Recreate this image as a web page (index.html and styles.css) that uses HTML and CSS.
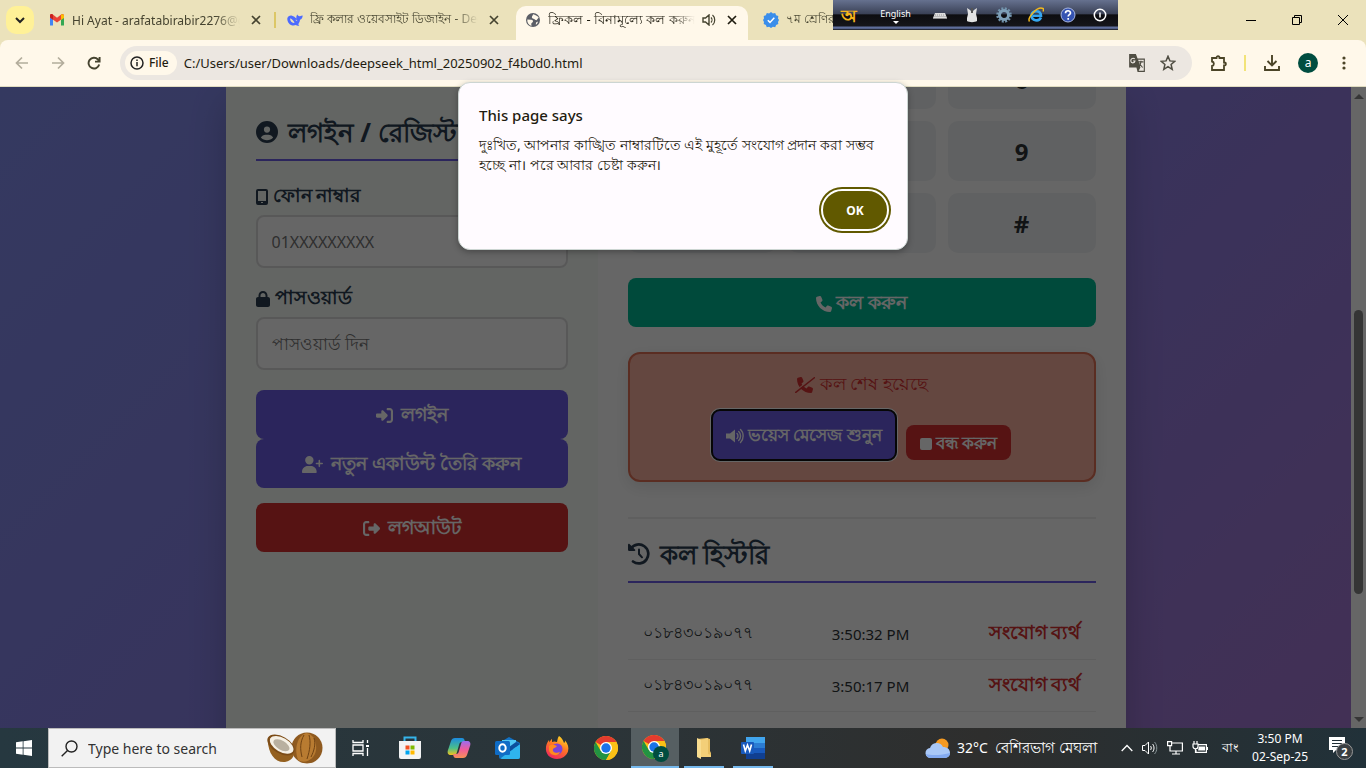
FILE: index.html
```html
<!DOCTYPE html>
<html lang="bn">
<head>
<meta charset="utf-8">
<meta name="viewport" content="width=device-width, initial-scale=1">
<title>ফ্রিকল - বিনামূল্যে কল করুন</title>
<link rel="stylesheet" href="styles.css">
</head>
<body>
<svg class="defs" width="0" height="0" aria-hidden="true">
  <symbol id="x" viewBox="0 0 10 10"><path d="M1 1l8 8M9 1l-8 8" fill="none" stroke="currentColor" stroke-width="1.7"/></symbol>
  <symbol id="chrome" viewBox="0 0 24 24"><circle cx="12" cy="12" r="12" fill="#fbc116"/><path d="M12 12L1.6 6A12 12 0 0 1 22.4 6z" fill="#e33b2e"/><path d="M1.6 6A12 12 0 0 0 12 24l5.2-9L12 12 6.8 15z" fill="#229342"/><path d="M12 6h10.4A12 12 0 0 1 12 24l5.2-9z" fill="#fbc116"/><circle cx="12" cy="12" r="6" fill="#fff"/><circle cx="12" cy="12" r="4.7" fill="#1a73e8"/></symbol>
</svg>

<header class="browser">
  <div class="tabstrip">
    <button class="tab-search" aria-label="Search tabs"><svg width="10" height="8" viewBox="0 0 10 8"><path d="M1 2l4 4 4-4" fill="none" stroke="#222" stroke-width="2"/></svg></button>
    <div class="tab">
      <svg width="16" height="16" viewBox="0 0 16 16"><path d="M1 13.500V5l3 2v6.500z" fill="#4285f4"/><path d="M12 13.500V7l3-2v8.500z" fill="#34a853"/><path d="M1 5.500V3.500c0-1.500 1.500-2 2.500-1.200L8 5.800l4.500-3.500c1-.8 2.500-.3 2.500 1.200v2L8 10.500z" fill="#ea4335"/><path d="M12 2.700c1-.9 3-.6 3 1.200v2l-3 2z" fill="#fbbc04"/><path d="M1 5.500V3.500c0-1.500 1.800-2 3-.8v5z" fill="#c5221f"/></svg>
      <span class="tab-title">Hi Ayat - arafatabirabir2276@gmail.com</span>
      <button class="tab-close" aria-label="Close tab"><svg><use href="#x"/></svg></button>
    </div>
    <span class="tab-sep"></span>
    <div class="tab">
      <svg width="16" height="16" viewBox="0 0 16 16"><path d="M.3 6.500C1 4 3 3.300 5 3.700c1.800.3 3 1.600 4.500 2.800C9 4.700 9.700 3.500 10.300 2.500c.6 1.300 1.400 1.800 2.700 1.700.9-.1 1.700-.7 2.700-.7-.1 2.400-1 3.700-2.700 4.200-.2 2-.9 3.400-2 4.600.6.300 1.200.6 1.200 1.100-1.200.5-2.400.2-3.400-.3C4.500 14.700.1 11.500.3 6.500z" fill="#4d6bfe"/><path d="M3 6.500c1.500 0 3.300 1.700 4.600 4.300C5.500 11.500 3.200 9.500 3 6.500zM8.500 8c.8-.5 1.700.2 1.800 1.200z" fill="#ebe2bb"/></svg>
      <span class="tab-title">ফ্রি কলার ওয়েবসাইট ডিজাইন - DeepSeek</span>
      <button class="tab-close" aria-label="Close tab"><svg><use href="#x"/></svg></button>
    </div>
    <span class="tab-sep clear"></span>
    <div class="tab active">
      <svg width="16" height="16" viewBox="0 0 16 16"><circle cx="8" cy="8" r="7" fill="#5b5e66"/><path d="M2.300 7.500l4 .3c1.500.2 2 1 1.500 2.200-.5 1-1.800 1-1.500 2.500l.2 1.500C3.500 13 2 10.500 2.300 7.500zM8 2.300c1.300 0 2 .8 3 1.200.8.400 2 .8 2.700 2l-2.200 2.700c-1 .2-1.600-.9-2.500-1.200C7.500 6.500 6.500 6 7 4.500c.3-.8 1-1 1-2.200zM11 10.500l2-1c-.3 1.500-1 2.500-2.200 3.300z" fill="#fff8ea"/></svg>
      <span class="tab-title">ফ্রিকল - বিনামূল্যে কল করুন</span>
      <svg class="sound" width="14" height="12" viewBox="0 0 14 12"><path d="M1 4h2.500L7 1v10L3.500 8H1z" fill="none" stroke="#45432f" stroke-width="1.400"/><path d="M9 3.500c1.300 1.300 1.300 3.700 0 5M10.500 1c3 2.500 3 7.500 0 10" fill="none" stroke="#45432f" stroke-width="1.200"/></svg>
      <button class="tab-close" aria-label="Close tab"><svg><use href="#x"/></svg></button>
    </div>
    <span class="tab-sep clear"></span>
    <div class="tab">
      <svg width="16" height="16" viewBox="0 0 16 16"><path d="M8 0l1.900 1.500 2.300-.5.900 2.200 2.200.9-.3 2.300L16 8l-1 1.900.3 2.200-2.200.9-.9 2.200-2.300-.5L8 16l-1.900-1.300-2.300.5-.9-2.200-2.200-.9.300-2.200L0 8l1-1.600-.3-2.300 2.200-.9L3.800 1l2.300.5z" fill="#3a8eea"/><path d="M4.800 8.200L7 10.400l4.300-4.600" fill="none" stroke="#fff" stroke-width="1.500"/></svg>
      <span class="tab-title">৭ম শ্রেণির</span>
    </div>
    <div class="window-controls">
      <button aria-label="Minimize"><svg width="12" height="12" viewBox="0 0 12 12"><path d="M1 6.500h10" stroke="#000"/></svg></button>
      <button aria-label="Restore"><svg width="12" height="12" viewBox="0 0 12 12" fill="none" stroke="#000"><path d="M1.500 3.500h7v7h-7zM3.500 3.500v-2h7v7h-2"/></svg></button>
      <button aria-label="Close"><svg width="12" height="12" viewBox="0 0 12 12"><path d="M1 1l10 10M11 1L1 11" stroke="#000"/></svg></button>
    </div>
  </div>
  <div class="toolbar">
    <button class="nav" aria-label="Back"><svg width="14" height="14" viewBox="0 0 14 14" fill="none" stroke="#b3ad9c" stroke-width="1.700"><path d="M13 7H2M7 1.500L1.500 7 7 12.500"/></svg></button>
    <button class="nav" aria-label="Forward"><svg width="14" height="14" viewBox="0 0 14 14" fill="none" stroke="#b3ad9c" stroke-width="1.700"><path d="M1 7h11M7 1.500L12.500 7 7 12.500"/></svg></button>
    <button class="nav" aria-label="Reload"><svg width="14" height="14" viewBox="0 0 14 14" fill="none" stroke="#45432f" stroke-width="1.900"><path d="M12.200 8.500A5.400 5.400 0 1 1 11 3.500L12.500 5M12.600 1v4.600H8"/></svg></button>
    <div class="address">
      <span class="chip"><svg width="14" height="14" viewBox="0 0 14 14"><circle cx="7" cy="7" r="6" fill="none" stroke="#222" stroke-width="1.500"/><path d="M7 6v4.200M7 3.500v1.500" stroke="#222" stroke-width="1.500"/></svg>File</span>
      <input class="url" aria-label="Address" value="C:/Users/user/Downloads/deepseek_html_20250902_f4b0d0.html">
      <svg width="18" height="18" viewBox="0 0 16 16"><path d="M1 0h6l1.500 4H15v12H8.500L7.500 12H1z" fill="#4f4d42"/><path d="M9 5h5v9.800H9.500L11 12z" fill="#ece7e1"/><path d="M6 4.300C4 3 2.300 4.500 2.500 6.200 2.700 8.500 6 8.300 6.200 6.200H4.500" fill="none" stroke="#ece7e1"/><path d="M8.800 7h5M11.500 6v1c0 2-1 3-2 4M10 8.500l3 3.500" fill="none" stroke="#4f4d42"/></svg>
      <svg class="star" width="16" height="16" viewBox="0 0 16 16"><path d="M8 1.300l1.900 4.600 4.900.4-3.700 3.200 1.100 4.800L8 11.700l-4.200 2.600 1.100-4.800L1.200 6.300l4.900-.4z" fill="none" stroke="#4f4d42" stroke-width="1.500"/></svg>
    </div>
    <svg class="ext" width="18" height="18" viewBox="0 0 18 18"><path d="M2 4h4.500C6.500 1.500 9.500 1.500 9.500 4H14v4.500c2.500 0 2.500 3 0 3V16H2v-4c2.500-.5 2.500-4 0-4.500z" fill="none" stroke="#4b4427" stroke-width="1.800"/></svg>
    <span class="bar-sep"></span>
    <svg class="dl" width="16" height="16" viewBox="0 0 16 16" fill="none" stroke="#4b4427" stroke-width="1.900"><path d="M8 0v10M3.500 6L8 10.500 12.500 6M1 11v4h14v-4"/></svg>
    <span class="avatar">a</span>
    <svg width="4" height="14" viewBox="0 0 4 14" fill="#4b4427"><circle cx="2" cy="2" r="1.600"/><circle cx="2" cy="7" r="1.600"/><circle cx="2" cy="12" r="1.600"/></svg>
  </div>
</header>

<div class="ime" aria-label="Keyboard input bar">
  <span class="ime-logo">অ</span>
  <span class="ime-lang">English<i></i></span>
  <svg width="16" height="16" viewBox="0 0 16 16"><path d="M3 6h10l2 5H1z" fill="#ddd"/><path d="M1 11h14v1H1z" fill="#888"/><path d="M3 8h10M2.500 9.500h11" stroke="#999" stroke-dasharray="1 1"/></svg>
  <svg width="16" height="16" viewBox="0 0 16 16"><path d="M3 1l3 2 1 1h2l1-1 3-2-1 6 1 4v3c-2 1.500-8 1.500-10 0v-3l1-4z" fill="#e2e2e2"/><path d="M8 1v5" stroke="#555" stroke-width="2"/></svg>
  <svg width="16" height="16" viewBox="0 0 16 16"><circle cx="8" cy="8" r="6.500" fill="none" stroke="#7293ac" stroke-width="2.500" stroke-dasharray="2 1.400"/><circle cx="8" cy="8" r="4.500" fill="none" stroke="#7ea0b8" stroke-width="3"/></svg>
  <svg width="16" height="16" viewBox="0 0 16 16"><path d="M13 10.500C11 15 3.500 14 3.500 8.500 3.500 3 13 2.500 13 8.700H5" fill="none" stroke="#35a7f0" stroke-width="2.600"/><path d="M1.500 14.500C-1 11 9-1 15 1.500c1 .5.500 2 0 3" fill="none" stroke="#f2b91d" stroke-width="1.500"/></svg>
  <svg width="16" height="16" viewBox="0 0 16 16"><circle cx="8" cy="8" r="7" fill="#3553b2" stroke="#a9b7e0"/><path d="M5.500 6.200C5.500 3 10.500 3 10.500 6c0 1.700-2.300 1.700-2.300 3.500M8.200 11v1.700" fill="none" stroke="#fff" stroke-width="1.700"/></svg>
  <svg width="16" height="16" viewBox="0 0 16 16"><circle cx="8" cy="8" r="5.700" fill="none" stroke="#fff" stroke-width="1.500"/><path d="M8 5.500v5" stroke="#fff" stroke-width="1.500"/></svg>
</div>

<main class="viewport">
  <div class="page">
    <div class="container">
      <section class="login">
        <h2 class="heading"><svg width="22" height="22" viewBox="0 0 512 512"><path d="M399 384.200C376.900 345.800 335.400 320 288 320H224c-47.400 0-88.900 25.800-111 64.200c35.200 39.200 86.200 63.800 143 63.800s107.800-24.700 143-63.800zM0 256a256 256 0 1 1 512 0A256 256 0 1 1 0 256zm256 16a72 72 0 1 0 0-144 72 72 0 1 0 0 144z"/></svg>লগইন / রেজিস্টার</h2>
        <label for="phone"><svg width="12" height="16" viewBox="0 0 12 16"><path d="M2 0h8a2 2 0 0 1 2 2v12a2 2 0 0 1-2 2H2a2 2 0 0 1-2-2V2a2 2 0 0 1 2-2zm0 2v10h8V2zm3 11v1h2v-1z" fill-rule="evenodd"/></svg>ফোন নাম্বার</label>
        <input class="field" id="phone" type="tel" placeholder="01XXXXXXXXX">
        <label for="pass"><svg width="14" height="16" viewBox="0 0 448 512"><path d="M144 144v48H304V144c0-44.200-35.800-80-80-80s-80 35.800-80 80zM80 192V144C80 64.500 144.500 0 224 0s144 64.500 144 144v48h16c35.300 0 64 28.700 64 64V448c0 35.300-28.700 64-64 64H64c-35.300 0-64-28.700-64-64V256c0-35.300 28.700-64 64-64H80z"/></svg>পাসওয়ার্ড</label>
        <input class="field bangla" id="pass" type="password" placeholder="পাসওয়ার্ড দিন">
        <button class="btn purple"><svg width="17" height="17" viewBox="0 0 512 512"><path d="M217.900 105.900L340.700 228.700c7.200 7.200 11.300 17.100 11.300 27.300s-4.100 20.100-11.300 27.300L217.900 406.100c-6.400 6.400-15 9.900-24 9.900c-18.700 0-33.900-15.200-33.900-33.900l0-62.100L32 320c-17.700 0-32-14.300-32-32l0-64c0-17.700 14.300-32 32-32l128 0 0-62.100c0-18.700 15.200-33.900 33.900-33.900c9 0 17.600 3.600 24 9.900zM352 416l64 0c17.700 0 32-14.300 32-32l0-256c0-17.700-14.300-32-32-32l-64 0c-17.700 0-32-14.300-32-32s14.300-32 32-32l64 0c53 0 96 43 96 96l0 256c0 53-43 96-96 96l-64 0c-17.700 0-32-14.300-32-32s14.300-32 32-32z"/></svg>লগইন</button>
        <button class="btn purple"><svg width="21" height="17" viewBox="0 0 640 512"><path d="M96 128a128 128 0 1 1 256 0A128 128 0 1 1 96 128zM0 482.300C0 383.800 79.800 304 178.300 304h91.400C368.200 304 448 383.800 448 482.300c0 16.400-13.300 29.700-29.700 29.700H29.700C13.300 512 0 498.700 0 482.300zM504 312V248H440c-13.300 0-24-10.700-24-24s10.700-24 24-24h64V136c0-13.300 10.700-24 24-24s24 10.700 24 24v64h64c13.300 0 24 10.700 24 24s-10.700 24-24 24H552v64c0 13.300-10.700 24-24 24s-24-10.700-24-24z"/></svg>নতুন একাউন্ট তৈরি করুন</button>
        <button class="btn red logout"><svg width="17" height="17" viewBox="0 0 512 512"><path d="M377.900 105.900L500.700 228.700c7.200 7.200 11.300 17.100 11.300 27.300s-4.100 20.100-11.300 27.300L377.900 406.100c-6.400 6.400-15 9.900-24 9.900c-18.700 0-33.900-15.200-33.900-33.900l0-62.100-128 0c-17.700 0-32-14.300-32-32l0-64c0-17.700 14.300-32 32-32l128 0 0-62.100c0-18.700 15.200-33.900 33.900-33.900c9 0 17.600 3.600 24 9.900zM160 96L96 96c-17.700 0-32 14.300-32 32l0 256c0 17.700 14.300 32 32 32l64 0c17.700 0 32 14.300 32 32s-14.300 32-32 32l-64 0c-53 0-96-43-96-96L0 128C0 75 43 32 96 32l64 0c17.700 0 32 14.300 32 32s-14.300 32-32 32z"/></svg>লগআউট</button>
      </section>
      <section class="dialer">
        <div class="keypad">
          <button aria-label="4"></button><button aria-label="5"></button><button>6</button>
          <button aria-label="7"></button><button aria-label="8"></button><button>9</button>
          <button aria-label="*"></button><button aria-label="0"></button><button>#</button>
        </div>
        <button class="btn green"><svg width="16" height="16" viewBox="0 0 512 512"><path d="M164.900 24.600c-7.700-18.600-28-28.500-47.400-23.200l-88 24C12.100 30.200 0 46 0 64C0 311.400 200.600 512 448 512c18 0 33.800-12.100 38.600-29.500l24-88c5.300-19.400-4.600-39.700-23.200-47.400l-96-40c-16.300-6.800-35.200-2.100-46.300 11.600L304.700 368C234.300 334.700 177.300 277.700 144 207.300L193.300 167c13.700-11.200 18.400-30 11.600-46.300l-40-96z"/></svg>কল করুন</button>
        <div class="status">
          <p><svg width="20" height="16" viewBox="0 0 640 512"><path transform="translate(64 0)" d="M164.900 24.600c-7.700-18.600-28-28.500-47.400-23.200l-88 24C12.100 30.200 0 46 0 64C0 311.400 200.600 512 448 512c18 0 33.800-12.100 38.600-29.500l24-88c5.300-19.400-4.600-39.700-23.200-47.400l-96-40c-16.300-6.800-35.200-2.100-46.300 11.600L304.700 368C234.300 334.700 177.300 277.700 144 207.300L193.300 167c13.700-11.200 18.400-30 11.600-46.300l-40-96z"/><path d="M20 445L590 0" stroke="#fab1a0" stroke-width="40"/><path d="M24 490L620 25" stroke="#d63031" stroke-width="48" stroke-linecap="round"/></svg>কল শেষ হয়েছে</p>
          <div class="actions">
            <button class="small purple focused"><svg width="18" height="16" viewBox="0 0 18 16"><path d="M0 5.500h4L9 1.500v13l-5-4H0z"/><path d="M11 5.500c1.300 1.200 1.300 3.800 0 5M12.700 3.500c2.500 2.200 2.500 6.800 0 9M14.500 1.500c3.500 3.200 3.500 9.800 0 13" fill="none" stroke="currentColor" stroke-width="1.400" stroke-linecap="round"/></svg>ভয়েস মেসেজ শুনুন</button>
            <button class="small red"><svg width="12" height="12" viewBox="0 0 12 12"><rect width="12" height="12" rx="2"/></svg>বন্ধ করুন</button>
          </div>
        </div>
        <div class="history">
          <h2 class="heading"><svg width="22" height="22" viewBox="0 0 22 22"><path d="M3 5.500A9.500 9.500 0 1 1 5 18.500" fill="none" stroke="currentColor" stroke-width="2.700" stroke-linecap="round"/><path d="M0 1.500c0-1 1-1 1.500-.5L7 6.500c.6.600.3 1.500-.5 1.500H1.500C.7 8 0 7.500 0 6.700z"/><path d="M11 6.500V11l3 3.300" fill="none" stroke="currentColor" stroke-width="2" stroke-linecap="round"/></svg>কল হিস্টরি</h2>
          <ul>
            <li><span>০১৮৪৩০১৯০৭৭</span><time>3:50:32 PM</time><b>সংযোগ ব্যর্থ</b></li>
            <li><span>০১৮৪৩০১৯০৭৭</span><time>3:50:17 PM</time><b>সংযোগ ব্যর্থ</b></li>
          </ul>
        </div>
      </section>
    </div>
  </div>
  <div class="scrollbar"><i class="up"></i><i class="thumb"></i><i class="down"></i></div>
  <div class="shade"></div>
</main>

<div class="alert" role="alertdialog" aria-labelledby="alert-title">
  <h1 id="alert-title">This page says</h1>
  <p>দুঃখিত, আপনার কাঙ্খিত নাম্বারটিতে এই মুহূর্তে সংযোগ প্রদান করা সম্ভব হচ্ছে না। পরে আবার চেষ্টা করুন।</p>
  <button>OK</button>
</div>

<footer class="taskbar">
  <button class="start" aria-label="Start"><svg width="16" height="16" viewBox="0 0 16 16" fill="#fff"><path d="M0 2.200L6.700 1.300v6.300H0zM7.500 1.200L16 0v7.600H7.500zM0 8.400h6.700v6.300L0 13.800zM7.500 8.400H16V16l-8.500-1.200z"/></svg></button>
  <div class="search">
    <svg width="17" height="17" viewBox="0 0 17 17" fill="none" stroke="#222" stroke-width="1.400"><circle cx="10.500" cy="6.500" r="5.500"/><path d="M6.500 10.500L.7 16.300"/></svg>
    <input aria-label="Search" placeholder="Type here to search">
    <svg width="58" height="34" viewBox="0 0 58 34"><circle cx="41" cy="17" r="15.500" fill="#8f5a1f"/><path d="M40 2c-9 4-12 15-8 27 8 5 17-2 18-10 1-9-3-16-10-17z" fill="#b87b31"/><path d="M38 4c-4 7-4 14-2 22M43 4c2 7 1 15-2 24M48 7c2 6 0 13-3 19" fill="none" stroke="#6f4213"/><path d="M2 10c0 12 7 22 17 21 8-1 11-9 9-14z" fill="#94601f"/><ellipse cx="15" cy="14" rx="15" ry="8.500" transform="rotate(30 15 14)" fill="#7c4c17"/><ellipse cx="15.500" cy="13.500" rx="13" ry="7" transform="rotate(30 15 14)" fill="#f5f0e5"/><ellipse cx="15.500" cy="14" rx="9" ry="4.500" transform="rotate(30 15 14)" fill="#b9b0a0"/></svg>
  </div>
  <div class="apps">
    <button aria-label="Task view"><svg width="18" height="16" viewBox="0 0 18 16" fill="none" stroke="#fff" stroke-width="1.300"><path d="M1 0v2.500h10V0M1 16v-2.500h10V16M1 5h10v6H1zM15.500 0v3M15.500 8v8"/><path d="M14 5h3v2h-3z" fill="#fff" stroke="none"/></svg></button>
    <button aria-label="Microsoft Store"><svg width="24" height="24" viewBox="0 0 24 24"><path d="M6.500 7V1.500h11V7" fill="none" stroke="#35b4ea" stroke-width="2"/><path d="M1 5h22v16a2 2 0 0 1-2 2H3a2 2 0 0 1-2-2z" fill="#f2f3f4"/><path d="M7.500 9.500h4v4h-4z" fill="#f25022"/><path d="M12.500 9.500h4v4h-4z" fill="#7fba00"/><path d="M7.500 14.500h4v4h-4z" fill="#00a4ef"/><path d="M12.500 14.500h4v4h-4z" fill="#ffb900"/></svg></button>
    <button aria-label="Copilot"><svg width="24" height="24" viewBox="0 0 24 24"><defs><linearGradient id="ca" x2="0" y2="1"><stop stop-color="#1c8be0"/><stop offset=".6" stop-color="#4cbf89"/><stop offset="1" stop-color="#f2c21b"/></linearGradient><linearGradient id="cb" x2="0" y2="1"><stop stop-color="#9b6cf0"/><stop offset=".5" stop-color="#ef5c9b"/><stop offset="1" stop-color="#f79155"/></linearGradient></defs><path d="M8 2h7c2 0 2.500 1.500 3 4h-3c-2 0-2.500 1-3 3l-2 7c-.5 2-1 3-3 3H4c-3 0-4-2-3-5L4 5c.7-2 2-3 4-3z" fill="url(#ca)"/><path d="M16 22H9c-2 0-2.500-1.500-3-4h3c2 0 2.500-1 3-3l2-7c.5-2 1-3 3-3h3c3 0 4 2 3 5l-3 9c-.7 2-2 3-4 3z" fill="url(#cb)"/></svg></button>
    <button aria-label="Outlook"><svg width="26" height="24" viewBox="0 0 26 24"><path d="M4 7l10-6 11 6v14a2 2 0 0 1-2 2H6a2 2 0 0 1-2-2z" fill="#1272c4"/><path d="M7 4h14v9H7z" fill="#50c8f5"/><path d="M25 8L6 22c0 1 1 1 2 1h15a2 2 0 0 0 2-2z" fill="#2fb4ee"/><path d="M25 8l-11 8-4-2 11-8z" fill="#0c4f9c"/><rect y="5" width="15" height="14" rx="1.500" fill="#0f6cc6"/><ellipse cx="7.500" cy="12" rx="3.200" ry="3.700" fill="none" stroke="#fff" stroke-width="2"/></svg></button>
    <button aria-label="Firefox"><svg width="24" height="24" viewBox="0 0 24 24"><defs><linearGradient id="ff" x1=".8" x2=".3" y2="1"><stop stop-color="#ffe226"/><stop offset=".45" stop-color="#ff7a23"/><stop offset="1" stop-color="#f0255d"/></linearGradient></defs><path d="M14 0c3 2 4 4 5 7 1-.5 1-1.500 1-2.500 3 3 4 7 3 11C21.500 20 17 23 12 23 5 23 0 18 1 11c.3-3 1.500-5 3-7l.5 2.500C5 5 6 3.500 7 3v3c2-1 3.500-.5 5 0 .5-2 .5-4 2-6z" fill="url(#ff)"/><circle cx="12" cy="13" r="5.500" fill="#7b43d8"/><path d="M4 10c2-2 5-1.500 8 0-1 2-3 1.500-4 3-1 3 3 5 7 3-2 5-10 4-11-2z" fill="#ff8a1f"/></svg></button>
    <button aria-label="Chrome"><svg width="24" height="24"><use href="#chrome"/></svg></button>
    <button class="current" aria-label="Chrome profile"><svg width="26" height="26" viewBox="0 0 26 26"><use href="#chrome" width="24" height="24"/></svg><span class="badge">a</span></button>
    <button class="open" aria-label="File Explorer"><svg width="16" height="22" viewBox="0 0 16 22"><path d="M1 2l10-1 3 1v12l1 2v4H4z" fill="#e6bd60"/><path d="M1 1l4 2v19l-4-2z" fill="#f8dc8f"/><path d="M5 3l7-2v16l3 1v2H5z" fill="#f3cf78"/></svg></button>
    <button class="open" aria-label="Word"><svg width="24" height="22" viewBox="0 0 24 22"><path d="M5 0h19v6H5z" fill="#41a5ee"/><path d="M5 6h19v5H5z" fill="#2b7cd3"/><path d="M5 11h19v5H5z" fill="#185abd"/><path d="M5 16h19v6H5z" fill="#103f91"/><rect y="5" width="13" height="12" rx="1" fill="#185abd"/><path d="M2.500 7.500L4.300 14l2.200-6 2.200 6 1.800-6.500" fill="none" stroke="#fff" stroke-width="1.600"/></svg></button>
  </div>
  <div class="tray">
    <svg width="26" height="21" viewBox="0 0 26 21"><circle cx="17" cy="7" r="6.500" fill="#f59a22"/><path d="M6 20a5 5 0 0 1-1-10 7 7 0 0 1 13-1c4 0 7 2 7 6a5 5 0 0 1-5 5z" fill="#a9c8f7"/><path d="M6 20a5 5 0 0 1-5-4c6 2 17 1 24-1a5 5 0 0 1-5 5z" fill="#83aaf0"/></svg>
    <span class="weather">32°C&nbsp; <span>বেশিরভাগ মেঘলা</span></span>
    <svg width="12" height="8" viewBox="0 0 12 8"><path d="M.7 7L6 1.500 11.300 7" fill="none" stroke="#fff" stroke-width="1.300"/></svg>
    <svg width="16" height="14" viewBox="0 0 16 14" fill="none" stroke="#fff"><path d="M.5 4.500H3L6.500 1v12L3 9.500H.5zM8.500 5c1 1 1 3 0 4M10.500 3c2 2 2 6 0 8"/><path d="M12.500 1c3 3 3 9 0 12" stroke="#8a9699"/></svg>
    <svg width="16" height="14" viewBox="0 0 16 14" fill="none" stroke="#fff" stroke-width="1.200"><path d="M5 2h10.400v8H3V5M9 10v3M5 13h8M.6.6h4v4h-4z"/></svg>
    <svg width="16" height="14" viewBox="0 0 16 14" fill="none" stroke="#fff" stroke-width="1.200"><path d="M6 3.600h8.400v7.800H4V9M15.500 6v3M1 3h5v2.500c0 3-5 3-5 0zM2 3V0M5 3V0M3.500 8v4"/><path d="M7 5.500h6v4H6z" fill="#fff" stroke="none"/></svg>
    <span class="lang">বাং</span>
    <span class="clock">3:50 PM<br>02-Sep-25</span>
    <span class="notes"><svg width="24" height="24" viewBox="0 0 24 24"><path d="M0 1h16v13H7l-3 3v-3H0z" fill="#fff"/><path d="M3 4.500h10M3 7.500h10M3 10.500h7" stroke="#223036"/></svg><b>2</b></span>
  </div>
</footer>
</body>
</html>
```
FILE: styles.css
```css
* { box-sizing: border-box; }
body {
  margin: 0;
  height: 100vh;
  display: flex;
  flex-direction: column;
  overflow: hidden;
  position: relative;
  font-family: "Noto Sans", "Open Sans", sans-serif;
  font-size: 12px;
  color: #1f1c10;
}
button { font: inherit; color: inherit; border: 0; background: none; padding: 0; }
input { font: inherit; color: inherit; min-width: 0; }
h1, h2, p, ul { margin: 0; padding: 0; }
svg { flex: none; }
.defs { position: absolute; }

/* browser chrome */
.browser { flex: none; background: #ebe2bb; }
.tabstrip { height: 40px; padding: 6px 0 0 6px; display: flex; }
.tab-search { width: 28px; height: 28px; border-radius: 10px; background: #fff197; margin-right: 6px; flex: none; display: grid; place-items: center; }
.tab { width: 232px; height: 34px; padding: 0 11px 6px 9px; display: flex; align-items: center; gap: 7px; flex: 0 1 232px; color: #45432f; }
.tab-title { flex: 1; white-space: nowrap; overflow: hidden; -webkit-mask-image: linear-gradient(90deg, #000 85%, transparent); mask-image: linear-gradient(90deg, #000 85%, transparent); }
.tab-close { width: 10px; height: 10px; margin-left: 4px; flex: none; display: grid; }
.tab-close svg { width: 10px; height: 10px; }
.tab-sep { width: 2px; height: 16px; margin: 6px 2px; background: #dcc766; flex: none; }
.tab-sep.clear { background: none; }
.active { background: #fff8ea; border-radius: 10px 10px 0 0; color: #1f1c10; }
.active .tab-title { font-size: 13px; }
.window-controls { margin-left: auto; display: flex; height: 28px; }
.window-controls button { width: 46px; display: grid; place-items: center; }
.toolbar { height: 47px; display: flex; align-items: center; padding: 0 20px 1px 14px; background: #fff8ea; border-bottom: 1px solid #e0dcc0; border-radius: 8px 8px 0 0; }
.nav { width: 16px; margin-right: 20px; display: grid; place-items: center; flex: none; }
.address { flex: 1; height: 34px; margin-right: 18px; margin-left: -2px; padding: 0 16px 0 5px; border-radius: 17px; background: #ece7e1; display: flex; align-items: center; }
.chip { height: 24px; padding: 0 8px 0 5px; border-radius: 12px; background: #fff8ea; display: flex; align-items: center; gap: 5px; font-weight: 500; }
.url { flex: 1; border: 0; background: none; margin: 0 7px; padding: 0; font-size: 13px; }
.star { margin-left: 14px; }
.bar-sep { width: 2px; height: 16px; background: #f2e378; margin: 0 18px 0 16px; }
.avatar { width: 20px; height: 20px; border-radius: 50%; background: #004d40; color: #fff; display: grid; place-items: center; margin: 0 24px 0 18px; line-height: 18px; }

/* floating input bar over the tab strip */
.ime { position: absolute; top: 0; right: 248px; width: 285px; height: 30px; padding: 0 10px 0 8px; display: flex; align-items: center; gap: 16px; background: linear-gradient(#66718f, #3b4257 45%, #0d0d10 50%, #15151a 85%, #6d7fb5 93%, #111); color: #fff; font-size: 9px; }
.ime-logo { color: #f5b51b; font-size: 18px; font-weight: 700; line-height: 28px; width: 18px; }
.ime-lang { display: grid; justify-items: center; line-height: 14px; margin: 0 auto; }
.ime-lang i { border: 3px solid transparent; border-top-color: #fff; border-bottom: 0; }

/* web page */
.viewport { flex: 1; min-height: 0; display: flex; position: relative; overflow: hidden; }
.page { flex: 1; display: flex; justify-content: center; background: linear-gradient(135deg, #838ff0, #8c80e6 55%, #a678d4); }
.container { width: 900px; flex: 0 1 900px; display: flex; background: #fff; box-shadow: 0 15px 35px rgba(0, 0, 0, .2); color: #2d3436; font-size: 16px; height: 900px; }
.login { flex: 0 0 372px; background: #f7fcf8; padding: 20px 30px; display: flex; flex-direction: column; }
.dialer { flex: 1; padding: 0 30px; margin-top: -38px; }
.heading { height: 54px; display: flex; align-items: center; gap: 10px; padding-bottom: 3px; border-bottom: 2px solid #6c5ce7; font-size: 26px; line-height: 36px; font-weight: 700; color: #2c3e50; fill: currentColor; white-space: nowrap; }
label { display: flex; align-items: center; gap: 5px; height: 24px; font-weight: 700; font-size: 19px; color: #2c3e50; fill: currentColor; margin: 24px 0 6px; }
.field + label { margin-top: 19px; }
.field { height: 53px; border: 2px solid #ddd; border-radius: 8px; background: #fff; padding: 0 14px; font-size: 16px; width: 100%; }
.field.bangla { font-size: 17px; }
.field::placeholder { color: #757575; }
.btn { width: 100%; height: 49px; padding-top: 2px; border-radius: 8px; font-size: 19px; font-weight: 700; color: #fff; fill: currentColor; display: flex; align-items: center; justify-content: center; gap: 8px; flex: none; }
.purple { background: #6c5ce7; }
.red { background: #d63031; }
.green { background: #00b894; gap: 4px; }
.field + .btn { margin-top: 20px; }
.logout { margin-top: 15px; }
.keypad { display: grid; grid-template-columns: repeat(3, 1fr); gap: 12px; margin-bottom: 25px; }
.keypad button { height: 60px; border-radius: 10px; background: #f1f3f5; font-size: 24px; font-weight: 700; }
.status { height: 130px; margin-top: 25px; border: 2px solid #e17055; border-radius: 12px; background: #fab1a0; padding: 19px 20px; box-shadow: 0 5px 15px rgba(0, 0, 0, .1); color: #d63031; text-align: center; }
.status p { display: flex; align-items: center; justify-content: center; gap: 5px; height: 24px; font-size: 18px; fill: currentColor; }
.actions { display: flex; align-items: flex-end; justify-content: center; gap: 10px; margin-top: 13px; }
.small { height: 35px; border-radius: 8px; padding: 2px 14px 0; color: #fff; fill: currentColor; font-size: 17px; font-weight: 700; display: flex; align-items: center; gap: 4px; white-space: nowrap; }
.small.focused { height: 50px; outline: 2px solid #101010; outline-offset: -1px; box-shadow: 0 0 0 2px #fff; }
.history { margin-top: 35px; border-top: 2px solid #eee; padding-top: 10px; }
.history ul { list-style: none; margin-top: 25px; }
.history li { height: 52px; border-bottom: 1px solid #eee; padding: 0 15px; display: flex; justify-content: space-between; align-items: center; }
.history time { font-size: 15px; }
.history b { color: #d63031; font-size: 19px; font-weight: 700; }
.scrollbar { width: 15px; flex: none; background: #fff; display: flex; flex-direction: column; align-items: center; padding: 7px 0 6px; }
.up, .down { border: 5px solid transparent; }
.up { border-top: 0; border-bottom-color: #888; }
.down { border-bottom: 0; border-top-color: #888; margin-top: auto; }
.thumb { width: 9px; height: 284px; border-radius: 5px; background: #858585; margin-top: 211px; }
.shade { position: absolute; inset: 0; background: rgba(0, 0, 0, .6); }

/* alert dialog over the page */
.alert { position: absolute; top: 82px; left: 50%; margin-left: -225px; width: 450px; min-height: 168px; padding: 20px 18px 18px 20px; background: #fffbff; border: 1px solid #ccd5d2; border-radius: 12px; display: flex; flex-direction: column; box-shadow: 0 2px 6px rgba(0, 0, 0, .3); }
.alert h1 { font-size: 15px; line-height: 24px; font-weight: 500; }
.alert p { font-size: 14px; line-height: 20px; margin-top: 8px; padding-right: 8px; }
.alert button { align-self: flex-end; margin-top: 14px; width: 68px; height: 42px; border-radius: 21px; background: #615900; color: #fff; font-size: 12px; font-weight: 700; border: 2px solid #fff; box-shadow: 0 0 0 2px #615900; }

/* taskbar */
.taskbar { flex: none; height: 40px; display: flex; background: linear-gradient(90deg, #263840, #2b3438 45%, #2e2e2d 72%, #213139); color: #fff; }
.start { width: 48px; display: grid; place-items: center; flex: none; }
.search { width: 288px; background: #f2f2f2; border: 1px solid #bbb; display: flex; align-items: center; padding: 0 11px 0 12px; }
.search input { flex: 1; border: 0; background: none; padding: 0; margin-left: 10px; font-size: 14px; color: #333; }
.search input::placeholder { color: #333; }
.apps { display: flex; padding-left: 1px; }
.apps button { width: 48px; margin-right: 1px; display: grid; place-items: center; position: relative; flex: none; }
.current { background: #565f62; box-shadow: inset 0 -2px #76b9ed; }
.open::after { content: ""; position: absolute; left: 4px; right: 4px; bottom: 0; height: 2px; background: #76b9ed; }
.badge { position: absolute; left: 22px; top: 18px; width: 16px; height: 16px; border-radius: 50%; background: #004d40; font-size: 9px; line-height: 15px; text-align: center; }
.tray { margin-left: auto; display: flex; align-items: center; gap: 9px; padding-right: 13px; white-space: nowrap; }
.weather { font-size: 14px; margin: 0 15px 0 -3px; }
.weather span { font-size: 15px; }
.lang { font-size: 13px; margin-left: 5px; }
.clock { text-align: center; line-height: 18px; margin: 0 12px 0 4px; }
.notes { position: relative; display: grid; }
.notes b { position: absolute; left: 7px; top: 7px; width: 17px; height: 17px; border: 1px solid #999; border-radius: 50%; background: #3a3f42; font-size: 11px; line-height: 15px; text-align: center; }
```
